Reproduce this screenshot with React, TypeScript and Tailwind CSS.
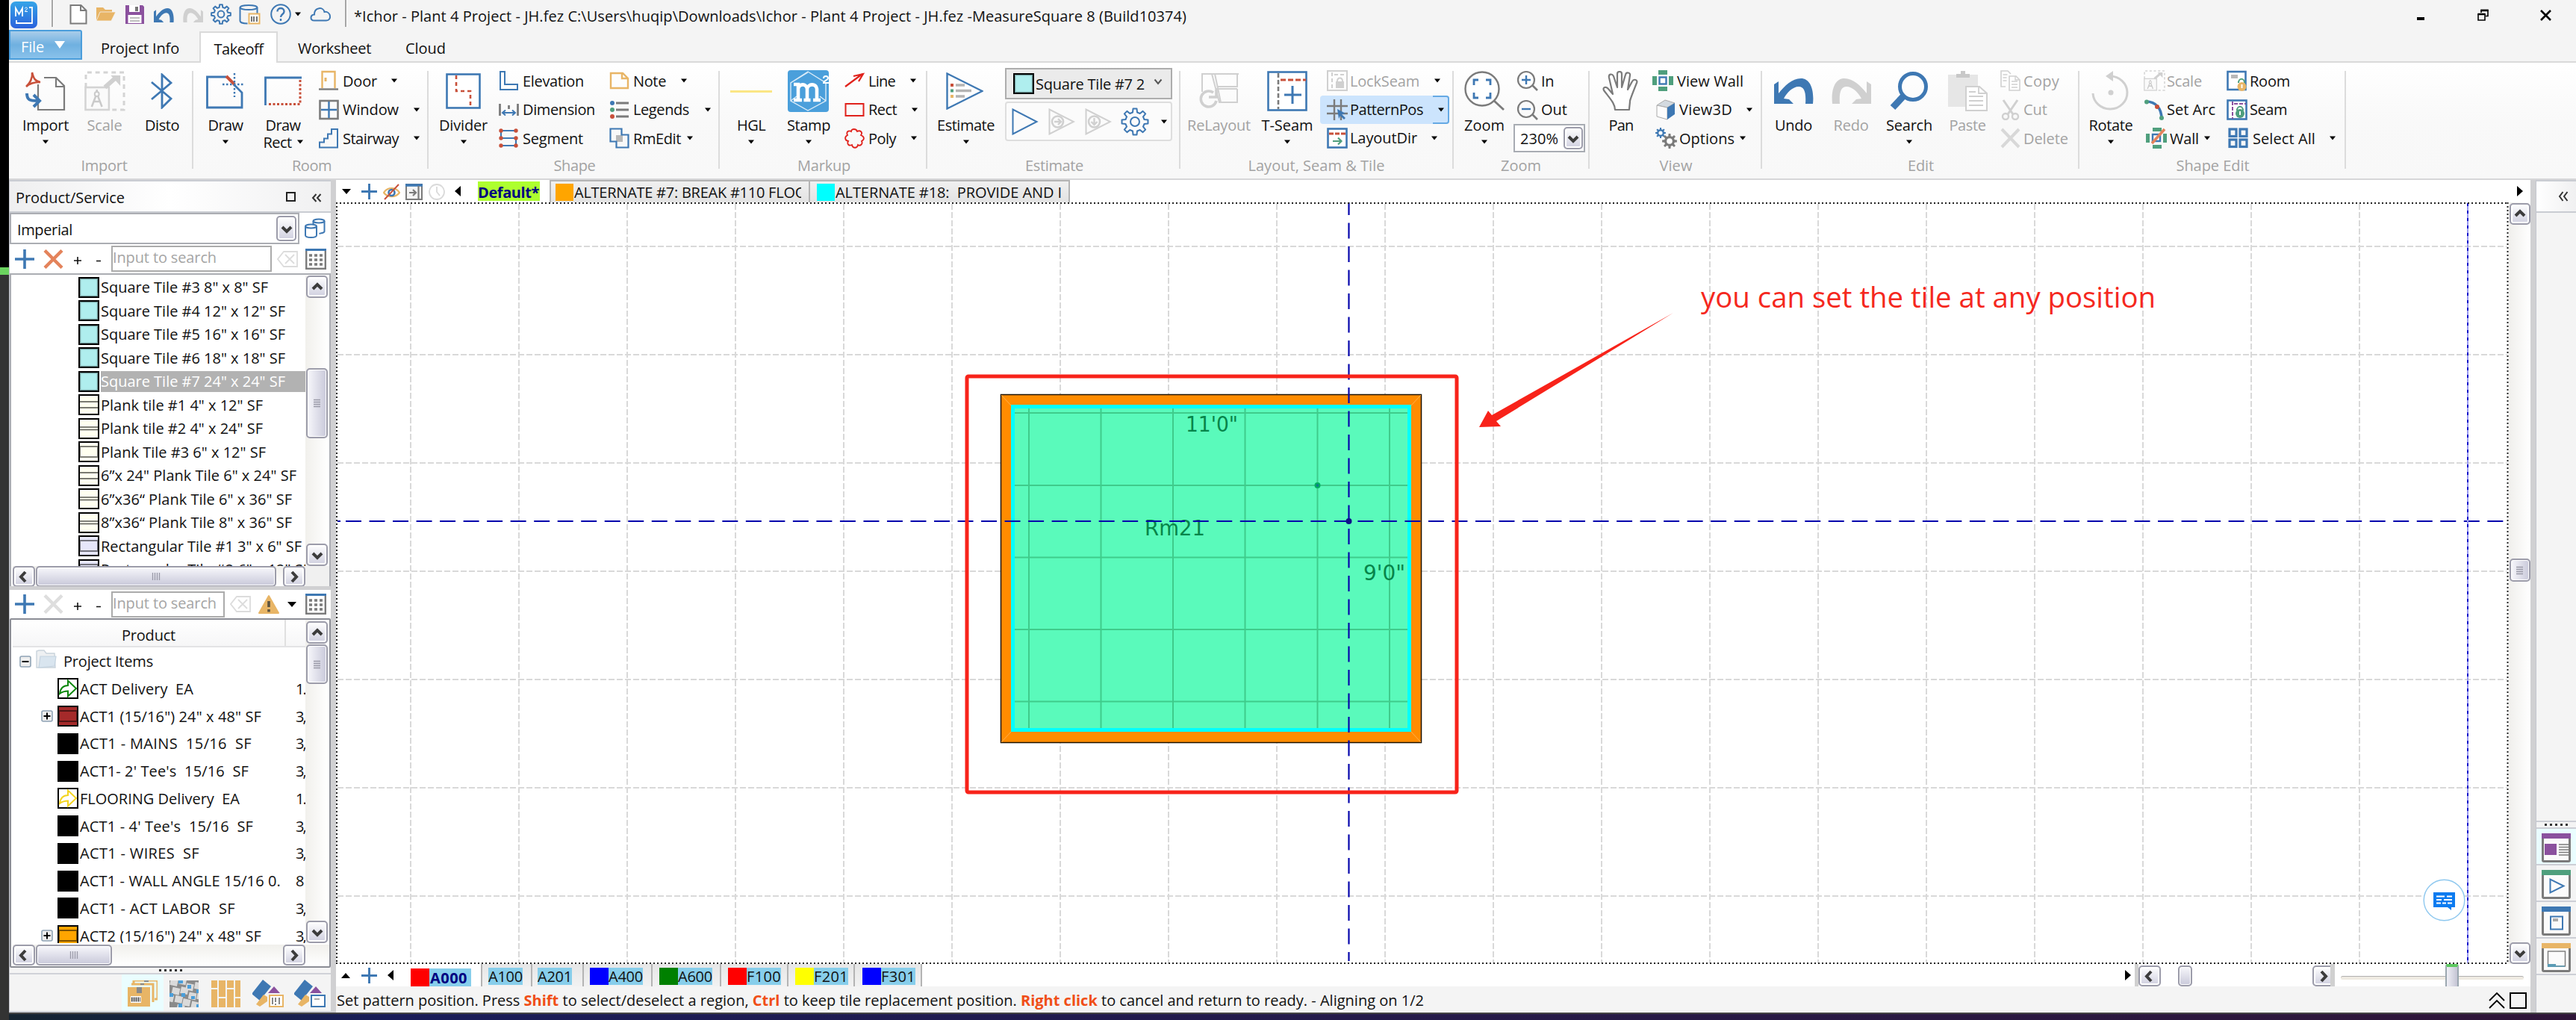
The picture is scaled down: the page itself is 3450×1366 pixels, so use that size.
import React, { useLayoutEffect, useRef } from "react";

const B = "#3e78b3";
const G = "#7b7b7b";
const L = "#d0d0d0";
const R = "#c8503a";
const Y = "#e8b566";
const N = "#4f9f7d";

/* Text whose tracking is computed so that it fills `w` pixels. */
function T({ w, className = "", children }: { w: number; className?: string; children: React.ReactNode }) {
  const ref = useRef<HTMLSpanElement>(null);
  useLayoutEffect(() => {
    const el = ref.current;
    if (!el) return;
    el.style.letterSpacing = "0px";
    const n = (el.textContent || "").length;
    const natural = el.getBoundingClientRect().width;
    if (n > 0) el.style.letterSpacing = `${(w - natural) / n}px`;
  }, [w]);
  return (
    <span ref={ref} className={"inline-block shrink-0 whitespace-pre pt-px " + className}>
      {children}
    </span>
  );
}

function I({ w = 28, h = 28, vb, className = "", children }: any) {
  return (
    <svg width={w} height={h} viewBox={vb || `0 0 ${w} ${h}`} fill="none" preserveAspectRatio="none" className={"block shrink-0 " + className}>
      {children}
    </svg>
  );
}

const Tri = ({ className = "" }) => (
  <I w={8} h={6} className={className}><path d="M0 .5h8L4 5.5z" fill="#000" /></I>
);
const TriSide = ({ left = false, className = "" }) => (
  <I w={8} h={14} className={className}><path d={left ? "M8 0v14L0 7z" : "M0 0v14l8-7z"} fill="#000" /></I>
);

/* ---------- shared icon drawings ---------- */
const undoPath = "M0 8 0 34 26 34 20 28 13 27 C17 19 25 11 33 11 C41 11 43 20 42 34 L52 34 C54 14 48 0 36 0 C24 0 14 10 6 20 L6 4z";
const Undo = ({ w, h, c = B, flip = false, className = "" }: any) => (
  <I w={w} h={h} vb="0 0 53 34" className={className}>
    <path d={undoPath} fill={c} transform={flip ? "translate(53 0) scale(-1 1)" : undefined} />
  </I>
);
const gearPts = (n: number, r1: number, r2: number) => {
  const p: string[] = [];
  for (let i = 0; i < n; i++) {
    const a = (i / n) * Math.PI * 2;
    const s = (Math.PI * 2) / n;
    [[-0.3, r1], [-0.18, r2], [0.18, r2], [0.3, r1]].forEach(([o, r]) => {
      const t = a + o * s;
      p.push(`${(Math.sin(t) * r).toFixed(2)},${(-Math.cos(t) * r).toFixed(2)}`);
    });
  }
  return p.join(" ");
};
const Gear = ({ s = 28, c = B, sw = 2 }: any) => (
  <I w={s} h={s} vb="-14 -14 28 28">
    <polygon points={gearPts(8, 9.5, 13)} stroke={c} strokeWidth={sw} strokeLinejoin="round" />
    <circle r="4.4" stroke={c} strokeWidth={sw} />
  </I>
);
const Plus = ({ s = 26, c = B }: any) => (
  <I w={s} h={s} vb="0 0 26 26"><path d="M13 0v26M0 13h26" stroke={c} strokeWidth="3.6" /></I>
);
const Cross = ({ c = "#e4835b" }: any) => (
  <I w={27} h={26}><path d="M2 1.5l23 23M25 1.5l-23 23" stroke={c} strokeWidth="4.4" /></I>
);
const GridIcon = () => (
  <I w={28} h={28}>
    <rect x="1.2" y="1.2" width="25.6" height="25.6" fill="#fff" stroke={G} strokeWidth="2.4" />
    <path d="M0 1.5h28" stroke={B} strokeWidth="3" />
    <path d="M5 9h18M5 15h18M5 21h18" stroke={G} strokeWidth="3.4" strokeDasharray="4 3" />
  </I>
);
const Backspace = () => (
  <I w={28} h={22}>
    <path d="M9 1h18v20H9L1 11z" stroke="#dcdcdc" strokeWidth="1.8" />
    <path d="M11 5l12 12M23 5L11 17" stroke="#dcdcdc" strokeWidth="1.8" />
  </I>
);
const Pages = () => (
  <I><path d="M1 19V1h9l4 4M7 22H1v-4" stroke={L} strokeWidth="1.6" /><path d="M3.5 6h6M3.5 10h5M3.5 14h5" stroke={L} strokeWidth="1.4" /><path d="M12 8h9l5 5v14H12z" fill="#fff" stroke={L} strokeWidth="1.6" /><path d="M15 15h8M15 19h8M15 23h8M20 8v5h6" stroke={L} strokeWidth="1.4" /></I>
);
const ScaleIcon = ({ w, h }: any) => (
  <I w={w} h={h} vb="0 0 56 54">
    <path d="M2 22V2h52v50H36" stroke="#d4d4d4" strokeWidth="3" strokeDasharray="6 5" />
    <rect x="1.5" y="22" width="32" height="30" fill="#fafafa" stroke="#d4d4d4" strokeWidth="2.6" />
    <path d="M28 22l16-14" stroke="#d0d0d0" strokeWidth="6" /><path d="M36 6h13v14z" fill="#d0d0d0" />
    <path d="M10 48l7-18 7 18M12 41h10M17 25v6" stroke="#cacaca" strokeWidth="2.6" /><circle cx="17" cy="31" r="3" fill="#fafafa" stroke="#cacaca" strokeWidth="2" />
  </I>
);
const DeliveryArrow = ({ c }: any) => (
  <I w={28} h={28}><rect x="1" y="1" width="26" height="26" fill="#fff" stroke="#000" strokeWidth="2" /><path d="M3 21C4 13 8 10 14 10V3.500l11 10.500-11 10.500v-7C10 17.500 7 18 3 21z" stroke={c} strokeWidth="2" /></I>
);
const Tile = ({ c, kind = 0 }: { c: string; kind?: number }) => (
  <I w={28} h={28}>
    <rect x="1" y="1" width="26" height="26" fill={c} stroke="#000" strokeWidth="2" />
    {kind === 0 && <rect x="2.5" y="2.5" width="23" height="23" stroke="#000" strokeOpacity=".35" strokeWidth="1.4" />}
    {kind === 1 && <path d="M2 10h24M2 18h24" stroke="#000" strokeOpacity=".7" strokeWidth="1.6" />}
    {kind === 2 && <path d="M2 12h24M2 15.5h24" stroke="#000" strokeOpacity=".65" strokeWidth="1.6" />}
    {kind === 3 && <path d="M1 7h26M1 21h26M2 7v14M26 7v14" stroke="#000" strokeOpacity=".5" strokeWidth="2" />}
  </I>
);

/* ---------- ribbon pieces ---------- */
function Group({ className, label, lw, children, labelClass = "" }: any) {
  return (
    <div className={"mt-[11px] h-[131px] shrink-0 border-r-2 border-[#dcdcdc] " + className}>
      <div className="-mt-[6px] flex h-[116px]">{children}</div>
      <div className={"flex h-[33px] items-center justify-center text-[#a3a3a3] " + labelClass}><T w={lw}>{label}</T></div>
    </div>
  );
}
function Big({ className, icon, label, w, arrow = false, off = false, second, sw = 0 }: any) {
  return (
    <div className={"flex shrink-0 flex-col items-center " + className}>
      <div className="flex h-[66px] items-center justify-center">{icon}</div>
      <div className={"flex h-[24px] items-center leading-6 " + (off ? "text-[#a3a3a3]" : "")}><T w={w}>{label}</T></div>
      {arrow && <Tri className="mt-[8px]" />}
      {second && <div className="flex h-[22px] items-center"><T w={sw}>{second}</T><Tri className="ml-[7px]" /></div>}
    </div>
  );
}
function Row({ icon, label, w, gap = "", off = false, iw = "w-8", className = "" }: any) {
  return (
    <div className={"flex h-[38.5px] shrink-0 items-center " + className}>
      <div className={"shrink-0 " + iw}>{icon}</div>
      <T w={w} className={off ? "text-[#a3a3a3]" : ""}>{label}</T>
      {gap && <Tri className={gap} />}
    </div>
  );
}

/* ---------- scroll bars ---------- */
const btn = "flex shrink-0 items-center justify-center rounded-[5px] border-2 border-[#9c9caa] bg-gradient-to-b from-white to-[#cfcfdf] shadow-[inset_0_0_0_2px_#fff]";
const chev: Record<string, string> = { u: "M3 11l6-6 6 6", d: "M3 6l6 6 6-6", l: "M11 2L5 8.500l6 6.500", r: "M6 2l6 6.500-6 6.500" };
const SB = ({ d, className }: { d: string; className: string }) => (
  <div className={btn + " " + className}><I w={18} h={17}><path d={chev[d]} stroke="#3c3c3c" strokeWidth="4" /></I></div>
);
const Thumb = ({ v = false, className = "", grip = true }: any) => (
  <div className={"flex shrink-0 items-center justify-center rounded-[5px] border-2 border-[#9c9caa] shadow-[inset_0_0_0_1px_#fff] " + (v ? "bg-gradient-to-r " : "bg-gradient-to-b ") + "from-[#f7f7fb] to-[#c9c9da] " + className}>
    {grip && <I w={12} h={12}><path d={v ? "M1 1.500h9M1 4.500h9M1 7.500h9M1 10.500h9" : "M1.500 1v10M4.500 1v10M7.500 1v10M10.500 1v10"} stroke="#9a9aa8" strokeWidth="1.300" /></I>}
  </div>
);

/* ---------- window parts ---------- */
function TitleBar() {
  return (
    <div className="flex h-[40px] shrink-0 items-start">
      <I w={36} h={36} className="ml-[2px] mt-[2px]">
        <defs><linearGradient id="lg" x1="0" y1="0" x2="0" y2="1"><stop stopColor="#35a5e8" /><stop offset="1" stopColor="#2b62dc" /></linearGradient></defs>
        <rect width="36" height="36" rx="7" fill="url(#lg)" />
        <path d="M7 20V9l4.500 8L16 9v11M25 8h4v21H8v-4" stroke="#fff" strokeWidth="1.800" />
        <path d="M19.500 9.500c0-2 3-2 3 0 0 1.500-3 2-3 4h3.500" stroke="#fff" strokeWidth="1" />
      </I>
      <div className="ml-[19px] h-[36px] w-[3px] border-r border-white bg-[#a6a6a6]" />
      <I w={24} h={27} className="ml-[21px] mt-[6px]"><path d="M1.500 1h14l7 7v17.500h-21zM15 1v7h7" fill="#fff" stroke={G} strokeWidth="2" /></I>
      <I w={27} h={20} className="ml-[11px] mt-[9px]"><path d="M1 18V1h9l3 3h9v3" fill={Y} /><path d="M6 7h21l-6 12H1z" fill={Y} stroke="#f5f5f5" strokeWidth=".8" /></I>
      <I w={25} h={25} className="ml-[13px] mt-[7px]"><path d="M0 0h23l2 2v23H0z" fill="#8b519e" /><path d="M5 0h14v9H5z" fill="#fff" /><path d="M13 2h4v6h-4z" fill="#777" /><path d="M3.500 13h18v11h-18z" fill="#fff" /><path d="M6 17h13M6 21h13" stroke="#aaa" strokeWidth="1.500" /></I>
      <Undo w={27} h={19} className="ml-[13px] mt-[11px]" />
      <Undo w={27} h={19} c={L} flip className="ml-[12px] mt-[11px]" />
      <div className="ml-[10px] mt-[5px]"><Gear s={28} /></div>
      <I w={29} h={28} className="ml-[10px] mt-[6px]"><ellipse cx="13" cy="4" rx="11.500" ry="3" stroke={B} strokeWidth="2" /><path d="M1.500 4v18c0 2 4 3.500 10 3.500M24.500 4v8" stroke={B} strokeWidth="2" /><rect x="13.500" y="12.500" width="14" height="13" fill="#fff" stroke={Y} strokeWidth="2" /><path d="M17 16v7M20 16v7M24 16v7" stroke="#666" strokeWidth="1.800" /></I>
      <I w={28} h={28} className="ml-[13px] mt-[5px]"><circle cx="14" cy="14" r="12.800" stroke={B} strokeWidth="2" /><path d="M9.500 10.500c0-6 9-6 9 0 0 3.500-4.500 3.500-4.500 7.500M14 20v3" stroke={B} strokeWidth="2.400" /></I>
      <Tri className="ml-[5px] mt-[16px]" />
      <I w={29} h={20} className="ml-[12px] mt-[9px]"><path d="M6 18.500C0 18.500 0 11 6 10.500 6 0 18 0 19.500 7 28 5.500 30 18.500 22 18.500z" stroke={B} strokeWidth="2" /></I>
      <div className="ml-[18px] h-[36px] w-[3px] border-r border-white bg-[#a6a6a6]" />
      <div className="ml-[9px] flex h-[43px] items-center"><T w={1115}>{"*Ichor - Plant 4 Project - JH.fez C:\\Users\\huqip\\Downloads\\Ichor - Plant 4 Project - JH.fez -MeasureSquare 8 (Build10374)"}</T></div>
      <div className="ml-auto mr-[32px] flex h-[40px] items-center">
        <div className="mt-[9px] h-[4px] w-[10px] bg-black" />
        <I w={15} h={16} className="ml-[71px]"><path d="M5 5V1.500h9v8h-3M1 7h9v8H1z" stroke="#000" strokeWidth="1.600" /><path d="M4.500 2h10M.5 7h10" stroke="#000" strokeWidth="2.400" /></I>
        <I w={17} h={15} className="ml-[68px]"><path d="M2 1l13 13M15 1L2 14" stroke="#000" strokeWidth="2.600" /></I>
      </div>
    </div>
  );
}

function TabsBar() {
  return (
    <div className="flex h-[44px] shrink-0 border-b-2 border-[#dadada]">
      <div className="flex h-[40px] w-[98px] items-center rounded-tr-[3px] border-2 border-[#4a9ddb] bg-gradient-to-b from-[#a9cdea] via-[#6fb0e0] to-[#8ac2eb] pl-[14px] pt-[4px] text-white">
        <T w={31}>File</T>
        <I w={14} h={10} className="ml-[14px] -mt-[4px]"><path d="M0 0h14L7 10z" fill="#fff" /></I>
      </div>
      <div className="ml-[25px] flex h-[49px] items-center"><T w={105}>Project Info</T></div>
      <div className="-mb-[2px] ml-[27px] mt-[2px] flex w-[105px] items-center justify-center border-2 border-b-0 border-[#dadada] bg-white pt-[2px]"><T w={66}>Takeoff</T></div>
      <div className="ml-[27px] flex h-[49px] items-center"><T w={98}>Worksheet</T></div>
      <div className="ml-[46px] flex h-[49px] items-center"><T w={54}>Cloud</T></div>
    </div>
  );
}

function Ribbon() {
  return (
    <div className="flex h-[157px] shrink-0 border-b-2 border-[#d6d6d8] bg-gradient-to-b from-white via-[#f9f9f9] to-[#f8f8f8]">
      <Group className="w-[247px]" label="Import" lw={62} labelClass="pl-[10px]">
        <Big className="ml-[9px] w-[80px]" label="Import" w={62} arrow icon={
          <I w={54} h={54}><path d="M17 22V52h35V20L41 9H25M17 18v4M41 9v12h11" stroke={G} strokeWidth="2.200" /><path d="M9 2c2 8 4 12 11 13-8 0-14 1-19 6 5-4 9-12 8-19z" stroke={R} strokeWidth="2.600" /><path d="M2 30c0 9 4 10 14 10M11 32l8 8-8 8" stroke={B} strokeWidth="4" /></I>} />
        <Big className="w-[78px]" label="Scale" w={47} off icon={<ScaleIcon w={55} h={54} />} />
        <Big className="w-[76px]" label="Disto" w={46} icon={
          <I w={32} h={48}><path d="M2 12l26 22-12 12V2l12 11L2 35" stroke={B} strokeWidth="2.800" /></I>} />
      </Group>
      <Group className="w-[315px]" label="Room" lw={53} labelClass="pl-[4px]">
        <Big className="w-[86px]" label="Draw" w={47} arrow icon={
          <I w={52} h={48}><path d="M27 5H1.500v41H48V26L37 15" stroke={B} strokeWidth="2.800" /><path d="M27 4l11 11" stroke={R} strokeWidth="4" /><path d="M38 0v32M22 15h32" stroke={B} strokeWidth="2.400" strokeDasharray="2.500 2.500" /></I>} />
        <Big className="w-[68px]" label="Draw" w={47} second="Rect" sw={38} icon={
          <I w={50} h={40}><path d="M1.500 39V2H50" stroke={B} strokeWidth="2.800" /><path d="M48 5v32.500H4" stroke={R} strokeWidth="3" strokeDasharray="3 2.500" /></I>} />
        <div className="ml-[14px]">
          <Row label="Door" w={46} gap="ml-[19px]" icon={<I w={27} h={28}><path d="M4.500 24V2h17v22" stroke={Y} strokeWidth="2.400" /><path d="M9 10v5" stroke={Y} strokeWidth="3" /><path d="M0 25.500h26" stroke={G} strokeWidth="2.400" /></I>} />
          <Row label="Window" w={75} gap="ml-[20px]" icon={<I w={27} h={28}><rect x="1.500" y="2" width="24" height="24" stroke={G} strokeWidth="2.600" /><path d="M13.500 3v22M3 14h21" stroke={B} strokeWidth="2.400" /></I>} />
          <Row label="Stairway" w={75} gap="ml-[20px]" icon={<I w={27} h={28}><path d="M1 26.500v-7h6v-5h5v-6h5v-6.500h8v24.500z" stroke={B} strokeWidth="2" /></I>} />
        </div>
      </Group>
      <Group className="w-[390px]" label="Shape" lw={56} labelClass="pl-[3px]">
        <Big className="w-[93px]" label="Divider" w={65} arrow icon={
          <I w={47} h={48}><rect x="1.500" y="1.500" width="44" height="45" stroke={B} strokeWidth="2.600" fill="#fff" /><path d="M14 3v21h19v22" stroke={R} strokeWidth="2.600" strokeDasharray="5 4" /></I>} />
        <div className="ml-px w-[148px]">
          <Row label="Elevation" w={82} icon={<I w={27} h={28}><path d="M2 2h6v17h17v7H2z" stroke={B} strokeWidth="2" /></I>} />
          <Row label="Dimension" w={97} icon={<I w={27} h={28}><path d="M1.500 6v16M25.500 6v16M13.500 8v5" stroke={G} strokeWidth="2.800" /><path d="M6 18h15M9 14.500L5 18l4 3.500M18 14.500l4 3.500-4 3.500" stroke={B} strokeWidth="2" /></I>} />
          <Row label="Segment" w={81} icon={<I w={27} h={28}><path d="M23 4H3v10h20v10H3" stroke={B} strokeWidth="2.200" />{[[3, 4], [23, 4], [3, 14], [23, 14], [3, 24], [23, 24]].map(([x, y]) => <circle key={x + "-" + y} cx={x} cy={y} r="2.700" fill={R} />)}</I>} />
        </div>
        <div>
          <Row label="Note" w={44} gap="ml-[20px]" icon={<I w={27} h={28}><path d="M2 4h16l7 7v13H2zM17 4v7h8" stroke={Y} strokeWidth="2.400" /></I>} />
          <Row label="Legends" w={75} gap="ml-[21px]" icon={<I w={27} h={28}><path d="M9 5h17M9 14h17M9 23h17" stroke={G} strokeWidth="2.800" /><circle cx="4" cy="5" r="3" fill={B} /><circle cx="4" cy="14" r="3" fill={N} /><circle cx="4" cy="23" r="3" fill={R} /></I>} />
          <Row label="RmEdit" w={64} gap="ml-[8px]" icon={<I w={27} h={28}><rect x="9" y="10" width="9" height="9" fill="#b8b8b8" /><path d="M1.500 1.500h15v8h9v17h-16v-8h-8z" stroke={B} strokeWidth="2.200" /></I>} />
        </div>
      </Group>
      <Group className="w-[278px]" label="Markup" lw={71} labelClass="pl-[3px]">
        <Big className="w-[84px]" label="HGL" w={38} arrow icon={<div className="h-[3px] w-[56px] bg-[#fbe685]" />} />
        <Big className="w-[70px]" label="Stamp" w={58} arrow icon={
          <I w={56} h={56}><rect width="55" height="56" rx="4" fill="#4a9fdb" /><path d="M27 2l24 15v24L27 54 4 41V17zM4 17L27 3M4 41l8-6M51 41l-8-6" stroke="#fff" strokeOpacity=".8" strokeWidth="1.400" /><path d="M8 19h6v20M14 25c1-7 11-8 12 0v14M26 25c1-7 12-8 13 0v14M8 40h11M21.500 40h9M34 40h10" stroke="#fff" strokeWidth="4.600" /><path d="M48 11c0-4 6-4 6 0 0 2-6 3-6 6h7" stroke="#fff" strokeWidth="2" /></I>} />
        <div className="ml-[13px]">
          <Row label="Line" w={36} gap="ml-[20px]" icon={<I w={27} h={28}><path d="M1 22L24 5M12 8l13-3-6 10" stroke="#e0221c" strokeWidth="2.200" /></I>} />
          <Row label="Rect" w={38} gap="ml-[20px]" icon={<I w={27} h={28}><rect x="1.500" y="6" width="24" height="16" stroke="#e0221c" strokeWidth="2" /></I>} />
          <Row label="Poly" w={37} gap="ml-[20px]" icon={<I w={27} h={28}><path d="M9 5c0-4 7-4 8 0 4-2 8 1 5 5 5 2 5 6 1 8 2 4-2 7-5 5-1 5-7 5-8 0-4 2-7-1-5-5-5-1-5-6-1-8-2-4 1-7 5-5z" stroke="#e0221c" strokeWidth="1.800" /></I>} />
        </div>
      </Group>
      <Group className="w-[339px]" label="Estimate" lw={78} labelClass="pl-[3px]">
        <Big className="w-[103px]" label="Estimate" w={77} arrow icon={
          <I w={50} h={50} className="-ml-[3px]"><path d="M1.500 1.500v47l47-23.500z" stroke={B} strokeWidth="2.400" fill="#fff" /><path d="M6 17h4" stroke={R} strokeWidth="4" /><path d="M6 24.500h4" stroke={N} strokeWidth="4" /><path d="M6 32h4" stroke={Y} strokeWidth="4" /><path d="M13 17h12M13 24.500h21M13 32h12" stroke="#b4b4b4" strokeWidth="3.600" /></I>} />
        <div className="ml-px w-[224px] pt-[2px]">
          <div className="flex h-[42px] items-center border-2 border-[#adadad] bg-[#ebebeb] pl-[9px]">
            <Tile c="#afeeee" />
            <div className="ml-[2px] w-[146px]"><T w={146}>{"Square Tile #7 2"}</T></div>
            <I w={12} h={9} className="ml-[12px] -mt-[6px]"><path d="M1.500 1.500L6 7l4.500-5.500" stroke="#555" strokeWidth="2" /></I>
          </div>
          <div className="mt-[3px] flex h-[53px] items-center rounded-[4px] border-2 border-[#dedede] bg-[#fbfbfb] pl-[7px]">
            <I w={36} h={36}><path d="M1.500 1.500v33L33.500 18z" stroke={B} strokeWidth="2" /></I>
            <I w={36} h={36} className="ml-[13px]"><path d="M1.500 1.500v33L34 18z" stroke={L} strokeWidth="2" /><circle cx="12.500" cy="18" r="7.500" stroke={L} strokeWidth="2.600" /><path d="M8 18h8M13 14l4 4-4 4" stroke={L} strokeWidth="2.400" /></I>
            <I w={36} h={36} className="ml-[13px]"><path d="M1.500 1.500v33L34 18z" stroke={L} strokeWidth="2" /><circle cx="12.500" cy="18" r="7.500" stroke={L} strokeWidth="2.600" /><path d="M12.500 13v8M8.500 18l4 4 4-4" stroke={L} strokeWidth="2.400" /></I>
            <div className="ml-[12px]"><Gear s={38} sw={1.500} /></div>
            <Tri className="ml-[16px]" />
          </div>
        </div>
      </Group>
      <Group className="w-[366px]" label="Layout, Seam & Tile" lw={183}>
        <Big className="w-[103px]" label="ReLayout" w={85} off icon={
          <I w={56} h={50}><path d="M5 26V2h49M53 40H28L18 2M22 2l8 38M24 22h28M52 22v18M52 2v17H26" stroke={L} strokeWidth="2" /><path d="M20 27a10.500 10.500 0 1 0 4 11M24 23v10H14" stroke={L} strokeWidth="3.600" /></I>} />
        <Big className="w-[80px]" label="T-Seam" w={69} arrow icon={
          <I w={54} h={54}><rect x="1.500" y="1.500" width="51" height="51" stroke={B} strokeWidth="2.600" fill="#fff" /><path d="M15 3v48" stroke={G} strokeWidth="2.600" strokeDasharray="6 3" /><path d="M18 12h34" stroke={R} strokeWidth="2.800" strokeDasharray="7 3" /><path d="M34 20v24M23 32h23" stroke={B} strokeWidth="3" /></I>} />
        <div className="ml-[4px] w-[173px]">
          <Row className="pl-[9px]" iw="w-[31px]" label="LockSeam" w={93} off gap="ml-[20px]" icon={<I><rect x="1" y="1" width="26" height="26" stroke={L} strokeWidth="2" /><path d="M7 3v22M10 6h15" stroke={L} strokeWidth="2" strokeDasharray="5 3" /><rect x="12" y="15" width="11" height="9" fill={L} /><path d="M14 15c0-6 7-6 7 0" stroke={L} strokeWidth="2" /></I>} />
          <div className="flex h-[38px] items-center rounded-[4px] bg-[#cce4fd] pl-[9px]">
            <div className="w-[31px]"><I><path d="M10 0v28M19 0v28M0 9h28M0 19h28" stroke={G} strokeWidth="2.400" /><path d="M14 13l11 6-5 1 5 5-2 2-5-5-2 4z" fill={B} /></I></div>
            <T w={98}>PatternPos</T>
            <div className="ml-auto flex h-full w-[22px] items-center rounded-r-[4px] border-2 border-l-0 border-[#65a9e4] pl-[7px]"><Tri /></div>
          </div>
          <Row className="pl-[9px]" iw="w-[31px]" label="LayoutDir" w={90} gap="ml-[19px]" icon={<I><rect x="1.500" y="1.500" width="25" height="25" fill="#fff" stroke={B} strokeWidth="2.600" /><path d="M3 8h23" stroke={R} strokeWidth="2.800" strokeDasharray="6 2" /><path d="M8 18h11M15 13.500l4.500 4.500-4.500 4.500" stroke={N} strokeWidth="2.200" /></I>} />
        </div>
      </Group>
      <Group className="w-[182px]" label="Zoom" lw={54}>
        <Big className="ml-[2px] w-[78px]" label="Zoom" w={54} arrow icon={
          <I w={54} h={54}><circle cx="24" cy="24" r="22.500" stroke={G} strokeWidth="2.400" fill="#fff" /><path d="M40 40l13 12" stroke={G} strokeWidth="2.800" /><path d="M13 19v-7h6M29 12h6v7M35 29v7h-6M19 36h-6v-7" stroke={B} strokeWidth="2.800" /></I>} />
        <div>
          <Row className="pl-[5px]" label="In" w={17} icon={<I><circle cx="12" cy="13" r="11" stroke={G} strokeWidth="2.200" /><path d="M20 20l7 7" stroke={G} strokeWidth="2.600" /><path d="M12 7v12M6 13h12" stroke={B} strokeWidth="2.400" /></I>} />
          <Row className="pl-[5px]" label="Out" w={35} icon={<I><circle cx="12" cy="13" r="11" stroke={G} strokeWidth="2.200" /><path d="M20 20l7 7" stroke={G} strokeWidth="2.600" /><path d="M6 13h12" stroke={B} strokeWidth="2.400" /></I>} />
          <div className="flex h-[38px] w-[96px] items-center border-2 border-[#a8acb3] bg-white pl-[7px]">
            <T w={51}>230%</T><SB d="d" className="ml-[7px] h-[30px] w-[26px]" />
          </div>
        </div>
      </Group>
      <Group className="w-[231px]" label="View" lw={44} labelClass="pl-[2px]">
        <Big className="w-[84px]" label="Pan" w={33} icon={
          <I w={50} h={54}><path d="M17 52c0-8-6-14-15-26-2-4 3-6 6-2l6 7L9 9c-1-5 4-6 6-2l5 15V4c0-4 6-4 6 0v18l5-17c1-4 7-3 6 1l-3 19 6-11c2-4 8-2 6 2-4 10-8 20-9 24 0 4-1 8-1 12z" fill="#fff" stroke={G} strokeWidth="2.200" strokeLinejoin="round" /></I>} />
        <div>
          <Row iw="w-[33px]" label="View Wall" w={89} icon={<I><path d="M8 0h12v6H8zM8 22h12v6H8zM0 8h6v12H0zM22 8h6v12h-6z" fill={N} /><rect x="9.500" y="9.500" width="9" height="9" stroke={B} strokeWidth="2.400" fill="#fff" /></I>} />
          <Row className="pl-[4px]" label="View3D" w={71} gap="ml-[19px]" icon={<I><path d="M2 8L13 1l13 4-10 6z" fill="#d3dae0" stroke="#aaa" /><path d="M2 8l14 3v16L2 23z" fill="#fdfdfd" stroke="#aaa" /><path d="M16 11l10-6v15l-10 7z" fill={B} /></I>} />
          <Row className="pl-[4px]" label="Options" w={74} gap="ml-[7px]" icon={<I w={29} h={28}><g transform="translate(7 7)"><polygon points={gearPts(8, 5, 7)} fill={B} /><circle r="2.600" fill="#fff" /></g><g transform="translate(19 18)"><polygon points={gearPts(8, 7, 10)} fill={G} /><circle r="3.800" fill="#fff" /></g></I>} />
        </div>
      </Group>
      <Group className="w-[425px]" label="Edit" lw={35} labelClass="pl-[2px]">
        <Big className="w-[84px]" label="Undo" w={50} icon={<Undo w={53} h={34} />} />
        <Big className="w-[70px]" label="Redo" w={47} off icon={<Undo w={53} h={34} c={L} flip />} />
        <Big className="w-[86px]" label="Search" w={62} arrow icon={
          <I w={52} h={52}><circle cx="31" cy="20" r="17.500" stroke={B} strokeWidth="5" /><path d="M18 33L4 48" stroke={B} strokeWidth="9" /></I>} />
        <Big className="w-[70px]" label="Paste" w={49} off icon={
          <I w={53} h={54}><path d="M0 5h40v43H0z" fill="#e6e6e6" /><path d="M11 9V4h6V0h6v4h6v5z" fill="#c8c8c8" /><path d="M24 21h18l10 9v23H24z" fill="#fff" stroke={L} strokeWidth="2" /><path d="M41 21v9h11M28 28h9M28 34h19M28 40h19M28 46h19" stroke={L} strokeWidth="1.800" /></I>} />
        <div className="ml-[9px]">
          <Row iw="w-[31px]" label="Copy" w={48} off icon={<Pages />} />
          <Row iw="w-[31px]" label="Cut" w={32} off icon={<I><path d="M4 1l13 19M23 1L10 20" stroke={L} strokeWidth="3" /><circle cx="7" cy="23" r="4" stroke={L} strokeWidth="2.400" /><circle cx="20" cy="23" r="4" stroke={L} strokeWidth="2.400" /></I>} />
          <Row iw="w-[31px]" label="Delete" w={60} off icon={<I><path d="M2 2l23 24M25 2L2 26" stroke="#d8d8d8" strokeWidth="4" /></I>} />
        </div>
      </Group>
      <Group className="w-[357px]" label="Shape Edit" lw={98} labelClass="pl-[2px]">
        <Big className="w-[84px]" label="Rotate" w={59} arrow icon={
          <I w={52} h={54}><path d="M25 7a23 22 0 1 1-23 23" stroke={L} strokeWidth="3" /><path d="M29 0v14l-10-7z" fill={L} /><circle cx="26" cy="29" r="3.500" fill={L} /></I>} />
        <div className="ml-[2px] w-[111px]">
          <Row iw="w-[31px]" label="Scale" w={47} off icon={<ScaleIcon w={29} h={28} />} />
          <Row iw="w-[31px]" label="Set Arc" w={65} icon={<I><path d="M3 3c14 0 21 10 21 23" stroke={B} strokeWidth="3.600" /><circle cx="4" cy="3.500" r="3" fill={N} /><circle cx="18" cy="10" r="3" fill={R} /><circle cx="24" cy="25" r="3" fill={N} /></I>} />
          <Row iw="w-[35px]" label="Wall" w={39} gap="ml-[7px]" icon={<I w={32} h={28}><path d="M12 0h12v5H12zM12 23h12v5H12zM3 8h5v12H3zM26 8h5v12h-5z" fill={N} /><rect x="12" y="9" width="10" height="9" stroke={B} strokeWidth="2.400" /><path d="M11 21L28 2" stroke="#e4835b" strokeWidth="3.600" /></I>} />
        </div>
        <div>
          <Row iw="w-[31px]" label="Room" w={54} icon={<I><rect x="1.500" y="2" width="24" height="24" stroke={B} strokeWidth="2.600" fill="#fff" /><path d="M6 6h9v5H6z" fill="#b8b8b8" /><path d="M16 17c0-7 8-7 8 0" stroke={N} strokeWidth="2" /><circle cx="20.500" cy="22" r="6" fill={Y} /><path d="M20.500 19v5" stroke="#fff" strokeWidth="2" /></I>} />
          <Row iw="w-[31px]" label="Seam" w={50} icon={<I><rect x="1.500" y="1.500" width="25" height="25" stroke={B} strokeWidth="2.600" fill="#fff" /><path d="M8 3v23M10 6h16" stroke="#8b519e" strokeWidth="2" strokeDasharray="5 2" /><path d="M14 15c0-7 8-7 8 0" stroke={N} strokeWidth="2" /><circle cx="18" cy="19" r="6" fill={N} /><path d="M18 16v5" stroke="#fff" strokeWidth="2" /></I>} />
          <Row className="pl-[2px]" iw="w-[33px]" label="Select All" w={84} gap="ml-[19px]" icon={<I>{[[2, 2], [16, 2], [2, 16], [16, 16]].map(([x, y]) => <rect key={x + "-" + y} x={x} y={y} width="9" height="9.500" stroke={B} strokeWidth="3.200" />)}</I>} />
        </div>
      </Group>
    </div>
  );
}

const tiles: [string, number, string, number][] = [
  ["Square Tile #3 8\" x 8\" SF", 224, "#afeeee", 0],
  ["Square Tile #4 12\" x 12\" SF", 247, "#afeeee", 0],
  ["Square Tile #5 16\" x 16\" SF", 247, "#afeeee", 0],
  ["Square Tile #6 18\" x 18\" SF", 247, "#afeeee", 0],
  ["Square Tile #7 24\" x 24\" SF", 247, "#afeeee", 0],
  ["Plank tile #1 4\" x 12\" SF", 217, "#fffff0", 1],
  ["Plank tile #2 4\" x 24\" SF", 217, "#fffff0", 2],
  ["Plank Tile #3 6\" x 12\" SF", 221, "#fffff0", 3],
  ["6”x 24\" Plank Tile 6\" x 24\" SF", 262, "#fffff0", 1],
  ["6”x36“ Plank Tile 6\" x 36\" SF", 256, "#fffff0", 2],
  ["8”x36“ Plank Tile 8\" x 36\" SF", 256, "#fffff0", 2],
  ["Rectangular Tile #1 3\" x 6\" SF", 269, "#e6e6fa", 3],
  ["Rectangular Tile #2 6\" x 12\" SF", 281, "#e6e6fa", 3],
];
const items: [string, number, string, string][] = [
  ["ACT Delivery  EA", 152, "green", "1."],
  ["ACT1 (15/16\") 24\" x 48\" SF", 243, "brown", "3,"],
  ["ACT1 - MAINS  15/16  SF", 230, "black", "3,"],
  ["ACT1- 2' Tee's  15/16  SF", 226, "black", "3,"],
  ["FLOORING Delivery  EA", 214, "yellow", "1."],
  ["ACT1 - 4' Tee's  15/16  SF", 232, "black", "3,"],
  ["ACT1 - WIRES  SF", 160, "black", "3,"],
  ["ACT1 - WALL ANGLE 15/16 0.", 269, "black", "8"],
  ["ACT1 - ACT LABOR  SF", 208, "black", "3,"],
  ["ACT2 (15/16\") 24\" x 48\" SF", 243, "orange", "3,"],
];
const Expander = ({ plus = false }) => (
  <I w={16} h={16}><rect x="1" y="1" width="14" height="14" rx="2" fill="#eee" stroke="#8fa3b5" strokeWidth="1.600" /><path d={plus ? "M3.500 8h9M8 3.500v9" : "M3.500 8h9"} stroke="#000" strokeWidth="2" /></I>
);
function itemIcon(k: string) {
  if (k === "green") return <DeliveryArrow c="#0a860a" />;
  if (k === "yellow") return <DeliveryArrow c="#f3d420" />;
  if (k === "brown") return <Tile c="#a52a2a" kind={3} />;
  if (k === "orange") return <Tile c="#ffa500" kind={3} />;
  return <div className="h-[28px] w-[28px] shrink-0 bg-black" />;
}

const SwatchTools = ({ x }: { x: number }) => (
  <I w={42} h={37}>
    <path d="M0 20L15 1l11 9-15 19z" fill={B} transform="translate(-1 -1)" /><path d="M21 18l8-9 8 9z" fill="#8b519e" /><path d="M5 33l10-13 5 3v6l-10 7z" fill={Y} />
    {x ? <><rect x="23" y="21" width="18" height="15" fill="#fff" stroke={B} strokeWidth="2" /><path d="M27 26h7" stroke="#aaa" strokeWidth="2" /></> : <><rect x="23" y="21" width="18" height="15" fill="#fff" stroke={Y} strokeWidth="2" /><path d="M27 24v9M31 24v6M31 32v2M36 24v9" stroke={G} strokeWidth="1.800" /></>}
  </I>
);

const PlusMinus = () => (
  <I w={37} h={12} className="ml-[14px] mt-[5px]"><path d="M0 6h10M5 1v10M30 6.500h6" stroke="#111" strokeWidth="1.600" /></I>
);

function LeftPanel() {
  return (
    <div className="flex w-[431px] shrink-0 flex-col border-l border-[#c5c7cf] bg-white">
      <div className="flex h-[44px] shrink-0 items-center border-b-2 border-t-2 border-[#c9ccd2] bg-gradient-to-r from-[#efeff0] via-white to-[#f0f0f1] pl-[8px] pt-[3px]">
        <T w={146}>Product/Service</T>
        <div className="ml-[216px] -mt-[3px] h-[13px] w-[13px] border-2 border-[#222]" />
        <I w={14} h={12} className="ml-[21px]"><path d="M6.500 1L2 6l4.500 5M12.500 1L8 6l4.500 5" stroke="#333" strokeWidth="2" /></I>
      </div>
      <div className="flex h-[42px] shrink-0 items-center">
        <div className="flex h-[42px] w-[388px] items-center justify-between border-2 border-[#abadb3] pl-[8px] pr-[2px]">
          <T w={74} className="mt-[2px]">Imperial</T><SB d="d" className="h-[34px] w-[27px]" />
        </div>
        <I w={28} h={28} className="ml-[7px]"><ellipse cx="19" cy="4" rx="7.500" ry="2.500" stroke={B} strokeWidth="2" /><path d="M11.500 4v5M26.500 4v14c0 2-4 2-7 3" stroke={B} strokeWidth="2" /><ellipse cx="8.500" cy="11" rx="7.500" ry="2.500" stroke={B} strokeWidth="2" /><path d="M1 11v12c0 4 15 4 15 0V11" stroke={B} strokeWidth="2" /></I>
      </div>
      <div className="flex h-[39px] shrink-0 items-center pl-[7px]">
        <Plus /><div className="ml-[12px]"><Cross /></div>
        <PlusMinus />
        <div className="ml-[13px] flex h-[35px] w-[215px] items-start border-2 border-[#ababab] leading-[25px] text-[#a5a5a5]"><T w={139}>Input to search</T></div>
        <div className="ml-[7px]"><Backspace /></div>
        <div className="ml-[10px]"><GridIcon /></div>
      </div>
      <div className="flex h-[419px] shrink-0 flex-col border-2 border-b-0 border-[#abadb3] pl-[2px] pt-px">
        <div className="flex h-[389px] shrink-0">
          <div className="w-[392px] shrink-0 overflow-hidden">
            {tiles.map(([t, w, c, k], i) => (
              <div key={t} className="flex h-[31.5px] items-center pl-[88px]">
                <Tile c={c} kind={k} />
                <div className={"ml-[2px] flex h-[28px] flex-1 items-center " + (i === 4 ? "bg-[#b2b2b2] text-white" : "")}><T w={w}>{t}</T></div>
              </div>
            ))}
          </div>
          <div className="flex w-[31px] flex-col bg-gradient-to-r from-[#f1f0ec] to-white pl-px">
            <SB d="u" className="h-[30px] w-[29px]" /><Thumb v className="mt-[94px] h-[94px] w-[29px]" /><SB d="d" className="mt-auto h-[30px] w-[29px]" />
          </div>
        </div>
        <div className="flex h-[28px] shrink-0 bg-gradient-to-b from-[#f1f0ec] to-white">
          <SB d="l" className="h-[28px] w-[30px]" /><Thumb className="ml-px h-[28px] w-[322px]" /><SB d="r" className="ml-[9px] h-[28px] w-[30px]" /><div className="flex-1 bg-[#f0f0f0]" />
        </div>
      </div>
      <div className="h-[5px] shrink-0 bg-[#d0d0d2]" />
      <div className="flex h-[38px] shrink-0 items-center pl-[7px]">
        <Plus /><div className="ml-[12px]"><Cross c="#dedede" /></div>
        <PlusMinus />
        <div className="ml-[13px] flex h-[35px] w-[152px] items-start border-2 border-[#ababab] leading-[25px] text-[#a5a5a5]"><T w={139}>Input to search</T></div>
        <div className="ml-[7px]"><Backspace /></div>
        <I w={28} h={27} className="ml-[10px]"><path d="M14 2l13 23H1z" fill={Y} stroke={Y} strokeWidth="2" strokeLinejoin="round" /><path d="M14 9v8M14 20v3.500" stroke="#5c5340" strokeWidth="3.600" /></I>
        <I w={12} h={7} className="ml-[11px]"><path d="M0 0h12L6 7z" fill="#000" /></I>
        <div className="ml-[12px]"><GridIcon /></div>
      </div>
      <div className="flex h-[468px] shrink-0 flex-col rounded-[2px] border-2 border-[#8b8d95] pl-[2px]">
        <div className="flex h-[433px] shrink-0">
          <div className="flex w-[392px] shrink-0 flex-col overflow-hidden">
            <div className="flex h-[37px] shrink-0 border-b-2 border-[#e3e3e5] bg-gradient-to-b from-white to-[#f6f6f7]">
              <div className="flex w-[366px] items-center justify-center border-r-2 border-[#e0e0e0] pt-[5px]"><T w={72}>Product</T></div>
            </div>
            <div className="flex h-[37px] shrink-0 items-center pl-[9px]">
              <Expander />
              <I w={28} h={25} className="ml-[6px] -mt-[6px]"><path d="M1 24V2l3-1h7l3 4h11l1 19z" fill="#eef0f2" stroke="#c9d3dc" strokeWidth="1.400" /><path d="M4 24L6 9h21l-2 13z" fill="#d9e5ef" stroke="#c4d3e0" strokeWidth="1.200" /></I>
              <T w={120} className="ml-[9px]">Project Items</T>
            </div>
            {items.map(([t, w, k, n], i) => (
              <div key={t} className="flex h-[36.750px] shrink-0 items-center pl-[38px]">
                <div className="w-[22px] shrink-0">{(i === 1 || i === 9) && <Expander plus />}</div>
                {itemIcon(k)}
                <div className="ml-[2px] w-[289px] shrink-0"><T w={w}>{t}</T></div><T w={13}>{n}</T>
              </div>
            ))}
          </div>
          <div className="flex w-[31px] flex-col bg-gradient-to-r from-[#f1f0ec] to-white pl-px pt-[2px]">
            <SB d="u" className="h-[30px] w-[29px]" /><Thumb v className="mt-px h-[53px] w-[29px]" /><SB d="d" className="mt-auto h-[30px] w-[29px]" />
          </div>
        </div>
        <div className="mt-[2px] flex h-[28px] shrink-0 bg-gradient-to-b from-[#f1f0ec] to-white">
          <SB d="l" className="h-[28px] w-[30px]" /><Thumb className="ml-px h-[28px] w-[102px]" /><SB d="r" className="ml-auto mr-[32px] h-[28px] w-[30px]" />
        </div>
      </div>
      <div className="flex h-[9px] shrink-0 items-center justify-center border-b-2 border-[#d0d2d8] bg-[#f4f4f4]">
        <div className="flex gap-[4px]">{[0, 1, 2, 3, 4].map((i) => <i key={i} className="h-[3px] w-[3px] bg-[#333]" />)}</div>
      </div>
      <div className="flex flex-1 items-center border-b-2 border-[#d0d2d8] bg-[#f4f4f4] pl-[150px]">
        <div className="flex h-full w-[56px] items-center justify-center bg-[#eafdff] pt-[3px]">
          <I w={40} h={36}><path d="M8 5V0h32v25h-4" fill="none" stroke={Y} strokeWidth="3" /><path d="M5 5h29v24" stroke={Y} strokeWidth="3" /><path d="M0 9h30v26H0z" fill={Y} /><path d="M12 9h7v8h-7zM17 4h5v2h-5zM22 0h6v2h-6z" fill="#888" /><rect x="4" y="21" width="14" height="9" fill="#fff" /><path d="M5 25.500h12" stroke="#333" strokeWidth="6" strokeDasharray="1.500 1.300" /></I>
        </div>
        <I w={39} h={36} className="ml-[8px] mt-[2px]"><rect width="39" height="36" fill="#8a8a8a" /><g transform="rotate(12 19 18)">{[[-2, 1, 9, 9], [9, -3, 9, 9], [20, 3, 9, 9], [31, -1, 9, 9], [3, 12, 9, 9], [14, 9, 9, 9], [26, 14, 9, 9], [-3, 23, 9, 9], [9, 22, 9, 9], [20, 24, 9, 9], [32, 25, 8, 9], [14, 33, 9, 6], [37, 12, 6, 9]].map(([x, y, w, h], i) => <rect key={i} x={x} y={y} width={w + 1} height={h} fill="#dadada" />)}</g>{[[12, 0, 6, 4], [24, 6, 5, 5], [0, 17, 5, 5], [16, 17, 5, 5], [36, 12, 3, 5], [29, 21, 5, 4], [12, 31, 5, 5], [36, 32, 3, 4]].map(([x, y, w, h], i) => <rect key={i} x={x} y={y} width={w} height={h} fill="#4a9fdb" />)}</I>
        <I w={39} h={36} className="ml-[17px] mt-[2px]"><path d="M0 0h8v10H0zM0 12h8v24H0zM10 0h9v22h-9zM10 24h9v12h-9zM21 0h9v10h-9zM21 12h9v24h-9zM32 0h7v22h-7zM32 24h7v12h-7z" fill={Y} /></I>
        <div className="ml-[16px] mt-[2px]"><SwatchTools x={0} /></div>
        <div className="ml-[14px] mt-[2px]"><SwatchTools x={1} /></div>
      </div>
    </div>
  );
}

const vx = Array.from({ length: 20 }, (_, i) => 550 + 145 * i);
const hy = Array.from({ length: 7 }, (_, i) => 330 + 145 * i);

function Drawing() {
  const tx = { fontFamily: '"DejaVu Sans Condensed","DejaVu Sans",sans-serif', fontSize: 28 } as const;
  return (
    <svg width="2910" height="1020" viewBox="450 271 2910 1020" className="block shrink-0 bg-white" fill="none">
      <g stroke="#d9d9d9" strokeWidth="2" strokeDasharray="8 3">
        {vx.map((x) => <path key={x} d={`M${x} 273V1290`} />)}
        {hy.map((y) => <path key={y} d={`M452 ${y}H3357`} />)}
      </g>
      <rect x="1340.500" y="528.500" width="563" height="466" fill="#ff8c00" stroke="#1c1200" strokeWidth="1.500" />
      <path d="M1341 529l14 15M1903 529l-14 15M1341 994l14-15M1903 994l-14-15" stroke="#ffb04d" strokeWidth="1" />
      <rect x="1356.500" y="544.500" width="531" height="433" fill="#5afabb" stroke="#00ffff" strokeWidth="5" />
      <path d="M1378 547V975M1474.500 547V975M1571 547V975M1667.500 547V975M1764.500 547V975M1861 547V975M1359 553H1885M1359 650H1885M1359 746.500H1885M1359 843H1885M1359 939.500H1885" stroke="#3fcb8b" strokeWidth="2" />
      <g fill="#07854a">
        <text x="1588" y="578" textLength="70" lengthAdjust="spacingAndGlyphs" style={tx}>11'0"</text>
        <text x="1533" y="717" textLength="81" lengthAdjust="spacingAndGlyphs" style={tx}>Rm21</text>
        <text x="1826" y="777" textLength="56" lengthAdjust="spacingAndGlyphs" style={tx}>9'0"</text>
      </g>
      <circle cx="1764.500" cy="650" r="3" fill="#0e7f8c" stroke="#00b060" strokeWidth="2" />
      <path d="M452 698h4M463 698H3357" stroke="#0606ac" strokeWidth="2" strokeDasharray="21 10.520" />
      <path d="M1806.500 267V1287" stroke="#0606ac" strokeWidth="2.200" strokeDasharray="21 10.500" />
      <circle cx="1806.500" cy="698" r="4" fill="#10108a" />
      <path d="M3305 272V1290" stroke="#9a9af2" strokeWidth="2" />
      <path d="M3305 272V1290" stroke="#1414c8" strokeWidth="2" strokeDasharray="4 6" />
      <rect x="1295" y="504" width="656" height="557" rx="2" stroke="#f8231a" strokeWidth="5" />
      <path d="M1981 572L1993 550 1998 556 2241 419 2004 564 2010 571z" fill="#f8231a" />
      <text x="2278" y="412" fill="#f5281e" textLength="609" lengthAdjust="spacingAndGlyphs" style={{ fontFamily: '"Open Sans","Noto Sans",sans-serif', fontSize: 39 }}>you can set the tile at any position</text>
      <path d="M450 272H3359M450 1290H3359" stroke="#222" strokeWidth="2" strokeDasharray="2 3" />
      <path d="M451 271V1291M3358.500 271V1291" stroke="#222" strokeWidth="2" strokeDasharray="2 3" />
      <circle cx="3273.500" cy="1205.500" r="27.300" fill="#fff" stroke="#8ec8ef" strokeWidth="1.400" />
      <path d="M3259 1195h29v20h-5v4l-5-4h-19z" fill="#0b7bf0" />
      <path d="M3263 1200.500h11M3277 1200.500h7M3263 1205h7M3273 1205h11M3263 1209.500h6M3271 1209.500h5M3278 1209.500h6" stroke="#fff" strokeWidth="1.800" />
    </svg>
  );
}

const sheets: [string, string, string][] = [
  ["A100", "", "w-[67px] pl-[8px]"],
  ["A201", "", "w-[69px] pl-[7px]"],
  ["A400", "bg-[#0000ff]", "w-[92px] pl-[8px]"],
  ["A600", "bg-[#008000]", "w-[92px] pl-[9px]"],
  ["F100", "bg-[#ff0000]", "w-[90px] pl-[9px]"],
  ["F201", "bg-[#ffff00]", "w-[89px] pl-[9px]"],
  ["F301", "bg-[#0000ff]", "w-[90px] pl-[10px]"],
];

function Canvas() {
  return (
    <div className="flex w-[2939px] shrink-0 flex-col bg-white">
      <div className="flex h-[30px] shrink-0 items-center">
        <I w={12} h={7} className="ml-[8px]"><path d="M0 0h12L6 7z" fill="#000" /></I>
        <div className="ml-[14px] mt-px"><Plus s={21} /></div>
        <I w={23} h={22} className="ml-[8px] mt-px"><path d="M1 12C6 4 17 4 22 12 17 19 6 19 1 12z" stroke={Y} strokeWidth="2.200" /><circle cx="11.500" cy="12" r="4" stroke={B} strokeWidth="2.600" /><path d="M2 21L21 1" stroke={R} strokeWidth="2" /></I>
        <I w={23} h={22} className="ml-[7px] mt-[2px]"><rect x="1" y="1" width="21" height="20" fill="#f4f4f4" stroke={G} strokeWidth="2" /><path d="M0 2h23" stroke={B} strokeWidth="3.600" /><path d="M5 12h9M10 8l4 4-4 4M17.500 3v18" stroke={G} strokeWidth="2.200" /></I>
        <I w={22} h={22} className="ml-[8px] mt-px"><circle cx="11" cy="11" r="10" stroke="#dadada" strokeWidth="1.800" /><path d="M11 4v7l4 5" stroke="#dadada" strokeWidth="1.800" /></I>
        <TriSide left className="ml-[13px]" />
        <div className="ml-[23px] flex h-[26px] w-[83px] items-center bg-[#adff2f] pt-[2px] font-bold text-[#000080]"><T w={82}>Default*</T></div>
        <div className="ml-[13px] flex h-full w-[348px] items-center border-l-2 border-r border-t-2 border-[#b4b4b4] bg-gradient-to-b from-[#f0f0f0] to-[#e2e2e2] pl-[6px] pt-px">
          <div className="h-[23px] w-[24px] bg-[#ffa500]" />
          <div className="ml-px w-[304px] overflow-hidden"><T w={311} className="-mb-[5px] pt-[4px]">{"ALTERNATE #7: BREAK #110 FLOO"}</T></div>
        </div>
        <div className="flex h-full w-[349px] items-center border-l border-r-2 border-t-2 border-[#b4b4b4] bg-gradient-to-b from-[#f0f0f0] to-[#e2e2e2] pl-[9px] pt-px">
          <div className="h-[23px] w-[24px] bg-[#00ffff]" />
          <div className="ml-px w-[304px] overflow-hidden"><T w={318} className="-mb-[5px] pt-[4px]">{"ALTERNATE #18:  PROVIDE AND IN"}</T></div>
        </div>
        <TriSide className="ml-auto mr-[10px]" />
      </div>
      <div className="flex h-[1020px] shrink-0">
        <Drawing />
        <div className="flex w-[29px] flex-col bg-gradient-to-r from-[#f0efec] to-white pl-px">
          <SB d="u" className="mt-px h-[29px] w-[28px]" /><Thumb v className="mt-[447px] h-[31px] w-[28px]" /><SB d="d" className="mt-auto h-[29px] w-[28px]" />
        </div>
      </div>
      <div className="flex h-[30px] shrink-0 items-start overflow-hidden">
        <I w={12} h={7} className="ml-[7px] mt-[12px]"><path d="M0 7h12L6 0z" fill="#000" /></I>
        <div className="ml-[15px] mt-[5px]"><Plus s={21} /></div>
        <TriSide left className="ml-[14px] mt-[8px]" />
        <div className="ml-[23px] mt-[6px] flex h-[24px] items-center font-bold text-[#000080]"><div className="h-full w-[25px] bg-[#ff0000]" /><div className="flex h-full w-[56px] items-center bg-[#87ceeb] pl-px pt-px"><T w={50}>A000</T></div></div>
        <div className="ml-[13px] flex">
          {sheets.map(([n, sw, cl]) => (
            <div key={n} className={"flex h-[30px] items-center border-l-2 border-[#b4b4b4] bg-gradient-to-b from-[#e6e6e6] to-[#f2f2f2] pt-[2px] " + cl}>
              {sw && <div className={"h-[23px] w-[25px] shrink-0 " + sw} />}
              <div className="flex h-[23px] w-[46px] items-center bg-[#87ceeb]"><T w={46}>{n}</T></div>
            </div>
          ))}
          <div className="h-[30px] w-[2px] bg-[#b4b4b4]" />
        </div>
        <TriSide className="ml-auto mt-[8px]" />
        <div className="ml-[5px] h-[30px] w-[5px] bg-[#d0d0d0]" />
        <SB d="l" className="mt-[2px] h-[28px] w-[30px]" />
        <Thumb grip={false} className="ml-[23px] mt-[2px] h-[28px] w-[19px]" />
        <div className="ml-[161px] flex w-[24px] overflow-hidden"><SB d="r" className="mt-[2px] h-[28px] w-[30px]" /></div>
        <div className="h-[30px] w-[6px] bg-[#d0d0d0]" />
        <div className="ml-[8px] mt-[16px] h-[5px] w-[140px] rounded-l border-t border-[#b0b0b0] bg-[#efebe2]" />
        <div className="h-[30px] w-[18px] shrink-0 rounded-t-[3px] border-x-2 border-t-4 border-x-[#9ba7b0] border-t-[#5cc95f] bg-gradient-to-r from-[#f0f0f6] to-[#c4c4d4]" />
        <div className="mr-[9px] mt-[16px] h-[5px] w-[87px] rounded-r border-t border-[#b0b0b0] bg-[#efebe2]" />
      </div>
      <div className="flex flex-1 items-center bg-[#f4f4f4] pl-px pt-[2px]">
        <T w={1456}>Set pattern position. Press <b className="text-[#f04e17]">Shift</b> to select/deselect a region, <b className="text-[#f04e17]">Ctrl</b> to keep tile replacement position. <b className="text-[#f04e17]">Right click</b> to cancel and return to ready. - Aligning on 1/2</T>
        <I w={22} h={22} className="ml-auto"><path d="M1 11L11 1l10 10M1 21l10-10 10 10" stroke="#000" strokeWidth="1.800" /></I>
        <div className="ml-[6px] mr-[5px] h-[22px] w-[23px] border-2 border-black" />
      </div>
    </div>
  );
}

function PanelIcon({ c, children }: any) {
  return <I w={39} h={39}><rect x="1.500" y="2" width="36" height="35.500" rx="1.500" fill="#fbfbfb" stroke={G} strokeWidth="3" /><path d="M0 0h39v7H0z" fill={c} />{children}</I>;
}
function RightPanel() {
  const cell = "flex h-[49px] shrink-0 items-center justify-center border-b-2 border-[#cdcfd6] pt-[3px]";
  return (
    <div className="flex flex-1 flex-col border-l border-[#c5c7cf] bg-[#f4f4f4]">
      <div className="flex h-[44px] shrink-0 items-center border-b-2 border-t-2 border-[#c9ccd2] bg-gradient-to-r from-white to-[#f0f0f1] pl-[29px]">
        <I w={14} h={14}><path d="M6.500 1L2 7l4.500 6M12.500 1L8 7l4.500 6" stroke="#333" strokeWidth="2" /></I>
      </div>
      <div className="h-[816px] shrink-0 border-b-2 border-[#cdcfd6]" />
      <div className="flex h-[9px] shrink-0 items-center justify-center border-b-2 border-[#cdcfd6]">
        <div className="flex gap-[4px]">{[0, 1, 2, 3, 4].map((i) => <i key={i} className="h-[3px] w-[3px] bg-[#333]" />)}</div>
      </div>
      <div className={cell + " bg-[#eafdff]"}><PanelIcon c="#8b519e"><path d="M4 14h16v15H4z" fill="#8b519e" /><path d="M23 15h13M23 18.500h13M23 22h13M23 25.500h13M23 29h13" stroke={G} strokeWidth="1.300" /></PanelIcon></div>
      <div className={cell}><PanelIcon c={N}><path d="M11.500 12.500v18l18-9z" stroke={B} strokeWidth="2" /></PanelIcon></div>
      <div className={cell}><PanelIcon c={B}><rect x="12" y="13.500" width="16" height="17" stroke={B} strokeWidth="2" /><path d="M15 16h7v4h-7z" fill="#aaa" /></PanelIcon></div>
      <div className={cell}><PanelIcon c={Y}><rect x="8.500" y="11" width="23" height="20" stroke={G} strokeWidth="1.400" /><path d="M8 28h11v4H8z" fill="#5a9bb5" /><path d="M19 31h12" stroke="#5a9bb5" strokeWidth="1.500" /></PanelIcon></div>
    </div>
  );
}

export default function App() {
  return (
    <div className="flex h-[1366px] w-[3450px] overflow-hidden bg-[#f4f4f4] font-['Open_Sans','Noto_Sans',sans-serif] text-[20px] leading-7 text-[#111]">
      <div className="flex w-[12px] shrink-0 flex-col bg-[#333]"><div className="h-[358px] bg-black" /><div className="h-[10px] bg-[#6bd35f]" /></div>
      <div className="flex w-[3438px] flex-col">
        <TitleBar />
        <TabsBar />
        <Ribbon />
        <div className="flex h-[1115px] shrink-0">
          <LeftPanel />
          <div className="w-[7px] shrink-0 bg-[#d0d0d2]" />
          <Canvas />
          <div className="w-[7px] shrink-0 bg-[#d0d0d2]" />
          <RightPanel />
        </div>
        <div className="h-[10px] shrink-0 border-t-2 border-[#444] bg-gradient-to-r from-[#162430] via-[#191c58] via-15% to-[#2f1538]" />
      </div>
    </div>
  );
}
